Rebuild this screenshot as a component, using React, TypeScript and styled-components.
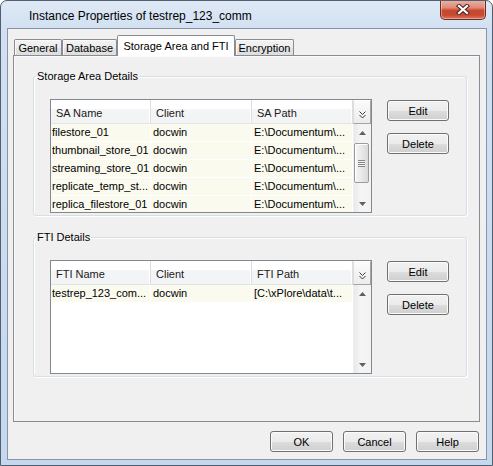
import React from 'react';
import styled, {createGlobalStyle} from 'styled-components';

const storageRows = [
	['filestore_01', 'docwin', 'E:\\Documentum\\...'],
	['thumbnail_store_01', 'docwin', 'E:\\Documentum\\...'],
	['streaming_store_01', 'docwin', 'E:\\Documentum\\...'],
	['replicate_temp_st...', 'docwin', 'E:\\Documentum\\...'],
	['replica_filestore_01', 'docwin', 'E:\\Documentum\\...']
];

const ftiRows = [['testrep_123_com...', 'docwin', '[C:\\xPlore\\data\\t...']];

const tabs = [
	{label: 'General', width: 48},
	{label: 'Database', width: 55},
	{label: 'Storage Area and FTI', width: 118, active: true},
	{label: 'Encryption', width: 59}
];

const GlobalStyle = createGlobalStyle`
	html, body {
		margin: 0;
		padding: 0;
		background: #ffffff;
	}
	body {
		font-family: "Liberation Sans", Arial, sans-serif;
		font-size: 11px;
		color: #000;
	}
	* {
		box-sizing: border-box;
	}
`;

interface ITable {
	columns: string[];
	rows: string[][];
	thumb?: {top: number; size: number};
}

function DataTable({columns, rows, thumb}: ITable) {
	return (
		<TableFrame>
			<Grid>
				{columns.map((c) => (
					<HeaderCell key={c}>{c}</HeaderCell>
				))}
				{rows.map((row, i) =>
					row.map((value, j) => (
						<Cell key={`${i}-${j}`} $indent={j === 0 ? 1 : 2}>
							{value}
						</Cell>
					))
				)}
			</Grid>
			<ScrollColumn>
				<ColumnPicker>
					<svg width="7" height="8" viewBox="0 0 7 8">
						<path
							d="M0.5 0.5 L3.5 3.5 L6.5 0.5 M0.5 4 L3.5 7 L6.5 4"
							stroke="#3a3a3a"
							strokeWidth="1"
							fill="none"
						/>
					</svg>
				</ColumnPicker>
				<ScrollTrack>
					<ArrowBox>
						<svg width="7" height="4" viewBox="0 0 7 4">
							<path d="M0 4 L3.5 0 L7 4 Z" fill="#606060" />
						</svg>
					</ArrowBox>
					<ThumbArea>
						{thumb && (
							<Thumb style={{marginTop: thumb.top, height: thumb.size}}>
								<Grip />
							</Thumb>
						)}
					</ThumbArea>
					<ArrowBox>
						<svg width="7" height="4" viewBox="0 0 7 4">
							<path d="M0 0 L3.5 4 L7 0 Z" fill="#606060" />
						</svg>
					</ArrowBox>
				</ScrollTrack>
			</ScrollColumn>
		</TableFrame>
	);
}

function DetailsGroup({
	title,
	columns,
	rows,
	thumb
}: ITable & {title: string}) {
	return (
		<Group>
			<GroupLegend>{title}</GroupLegend>
			<GroupRow>
				<DataTable columns={columns} rows={rows} thumb={thumb} />
				<ButtonColumn>
					<Button>Edit</Button>
					<Button>Delete</Button>
				</ButtonColumn>
			</GroupRow>
		</Group>
	);
}

export default function App() {
	return (
		<>
			<GlobalStyle />
			<Window>
				<TitleBar>
					<Caption>Instance Properties of testrep_123_comm</Caption>
					<CloseButton>
						<svg width="14" height="11" viewBox="0 0 14 11">
							<path
								d="M3 2 L11 9 M11 2 L3 9"
								stroke="#4a2520"
								strokeWidth="4.2"
								strokeLinecap="square"
							/>
							<path
								d="M3 2 L11 9 M11 2 L3 9"
								stroke="#ffffff"
								strokeWidth="2.2"
								strokeLinecap="square"
							/>
						</svg>
					</CloseButton>
				</TitleBar>
				<Body>
					<TabStrip>
						{tabs.map((t) => (
							<Tab key={t.label} $width={t.width} $active={!!t.active}>
								{t.label}
							</Tab>
						))}
					</TabStrip>
					<TabPanel>
						<DetailsGroup
							title="Storage Area Details"
							columns={['SA Name', 'Client', 'SA Path']}
							rows={storageRows}
							thumb={{top: 2, size: 40}}
						/>
						<DetailsGroup
							title="FTI Details"
							columns={['FTI Name', 'Client', 'FTI Path']}
							rows={ftiRows}
						/>
					</TabPanel>
					<Footer>
						<Button>OK</Button>
						<Button>Cancel</Button>
						<Button>Help</Button>
					</Footer>
				</Body>
			</Window>
		</>
	);
}

const Window = styled.div`
	width: 493px;
	height: 466px;
	display: flex;
	flex-direction: column;
	border: 1px solid #4f5e70;
	border-radius: 7px 7px 0 0;
	background: linear-gradient(
		to bottom,
		#dfe9f6 0px,
		#d2e0f1 28px,
		#c5d8ee 100%
	);
	overflow: hidden;
`;

const TitleBar = styled.div`
	height: 27px;
	display: flex;
	align-items: center;
	padding-left: 28px;
	flex-shrink: 0;
`;

const Caption = styled.div`
	font-size: 12px;
	color: #000;
	padding-top: 2px;
	white-space: nowrap;
`;

const CloseButton = styled.div`
	align-self: flex-start;
	margin-left: auto;
	margin-top: -1px;
	margin-right: 6px;
	width: 46px;
	height: 20px;
	display: flex;
	align-items: center;
	justify-content: center;
	border: 1px solid #6e2b22;
	border-top: none;
	border-radius: 0 0 5px 5px;
	background: linear-gradient(
		to bottom,
		#eab3a5 0%,
		#df8a76 40%,
		#c9472f 55%,
		#c64a32 80%,
		#dc7a60 100%
	);
	box-shadow: inset 0 0 0 1px rgba(255, 220, 210, 0.45);
`;

const Body = styled.div`
	flex: 1;
	margin: 0 5px 5px 6px;
	border: 1px solid #8596ab;
	background: #f0f0f0;
	padding: 6px 6px 7px 5px;
	display: flex;
	flex-direction: column;
	min-height: 0;
`;

const TabStrip = styled.div`
	height: 20px;
	display: flex;
	align-items: flex-end;
	padding-left: 1px;
	position: relative;
	z-index: 1;
`;

interface ITab {
	$width: number;
	$active: boolean;
}

const Tab = styled.div<ITab>`
	width: ${(p) => p.$width}px;
	height: ${(p) => (p.$active ? 21 : 16)}px;
	margin-bottom: ${(p) => (p.$active ? -1 : 0)}px;
	display: flex;
	align-items: center;
	justify-content: center;
	padding-bottom: ${(p) => (p.$active ? 1 : 0)}px;
	border: 1px solid #898c95;
	border-bottom: none;
	border-radius: 2px 2px 0 0;
	white-space: nowrap;
	font-size: 11px;
	background: ${(p) =>
		p.$active
			? '#ffffff'
			: 'linear-gradient(to bottom, #f3f3f3 0%, #ececec 50%, #e3e3e3 51%, #dedede 100%)'};
	box-shadow: ${(p) => (p.$active ? 'none' : 'inset 1px 1px 0 #fafafa')};
`;

const TabPanel = styled.div`
	flex: 1;
	border: 1px solid #898c95;
	background: #f0f0f0;
	box-shadow: inset 1px 1px 0 #fbfbfb;
	padding: 14px 12px 0 19px;
	display: flex;
	flex-direction: column;
	gap: 15px;
`;

const Group = styled.fieldset`
	margin: 0;
	padding: 16px 16px 2px 16px;
	border: 1px solid #d5dfe5;
	border-radius: 3px;
	box-shadow: 1px 1px 0 #ffffff, inset 1px 1px 0 #ffffff;
	min-width: 0;
`;

const GroupLegend = styled.legend`
	margin-left: -14px;
	padding: 0 1px;
	font-size: 11px;
	line-height: 13px;
	color: #000;
`;

const GroupRow = styled.div`
	display: flex;
	align-items: flex-start;
	gap: 15px;
`;

const TableFrame = styled.div`
	width: 322px;
	height: 114px;
	border: 1px solid #828790;
	background: #ffffff;
	display: flex;
	overflow: hidden;
`;

const Grid = styled.div`
	width: 302px;
	display: grid;
	grid-template-columns: 100px 101px 101px;
	grid-template-rows: 24px;
	grid-auto-rows: 18px;
	align-content: start;
	overflow: hidden;
`;

const HeaderCell = styled.div`
	height: 24px;
	padding: 2px 0 0 5px;
	display: flex;
	align-items: center;
	color: #1a1a1a;
	white-space: nowrap;
	background: linear-gradient(
		to bottom,
		#ffffff 0%,
		#ffffff 40%,
		#f4f5f7 41%,
		#f2f3f5 100%
	);
	border-right: 1px solid #dcdee2;
	border-bottom: 1px solid #e2e4e7;
	box-shadow: inset -1px 0 0 #ffffff;
`;

interface ICell {
	$indent: number;
}

const Cell = styled.div<ICell>`
	height: 18px;
	padding-left: ${(p) => p.$indent}px;
	line-height: 17px;
	white-space: nowrap;
	overflow: hidden;
	background: #fafaef;
	border-right: 1px solid #ffffff;
	border-bottom: 1px solid #ffffff;
`;

const ScrollColumn = styled.div`
	width: 18px;
	display: flex;
	flex-direction: column;
`;

const ColumnPicker = styled.div`
	height: 24px;
	display: flex;
	align-items: center;
	justify-content: center;
	padding-top: 6px;
	border: 1px solid;
	border-color: #ffffff #a4a4a4 #a4a4a4 #dcdcdc;
	background: linear-gradient(to bottom, #fbfbfb, #ececec);
`;

const ScrollTrack = styled.div`
	flex: 1;
	display: flex;
	flex-direction: column;
	background: linear-gradient(to right, #e9e9e9, #f5f5f5 40%, #f2f2f2);
	border-left: 1px solid #efefef;
`;

const ArrowBox = styled.div`
	height: 17px;
	display: flex;
	align-items: center;
	justify-content: center;
	flex-shrink: 0;
`;

const ThumbArea = styled.div`
	flex: 1;
	padding-left: 0;
	overflow: hidden;
`;

const Thumb = styled.div`
	width: 15px;
	border: 1px solid #9b9b9b;
	border-radius: 2px;
	background: linear-gradient(to right, #f6f6f6, #e9e9e9 50%, #d9d9d9);
	box-shadow: inset 1px 1px 0 #ffffff;
	display: flex;
	align-items: center;
	justify-content: center;
`;

const Grip = styled.div`
	width: 7px;
	height: 7px;
	background: repeating-linear-gradient(
		to bottom,
		#858585 0px,
		#858585 1px,
		#f4f4f4 1px,
		#f4f4f4 2px
	);
`;

const ButtonColumn = styled.div`
	display: flex;
	flex-direction: column;
	gap: 12px;
	margin-top: 1px;
`;

const Button = styled.button`
	width: 62px;
	height: 21px;
	padding: 0;
	font-family: "Liberation Sans", Arial, sans-serif;
	font-size: 11px;
	color: #000;
	border: 1px solid #707070;
	border-radius: 3px;
	background: linear-gradient(
		to bottom,
		#f2f2f2 0%,
		#ebebeb 50%,
		#dddddd 51%,
		#cfcfcf 100%
	);
	box-shadow: inset 0 0 0 1px #fbfbfb;
`;

const Footer = styled.div`
	display: flex;
	justify-content: flex-end;
	gap: 10px;
	margin-top: 9px;
	padding-right: 1px;
	${Button} {
		width: 63px;
	}
`;
